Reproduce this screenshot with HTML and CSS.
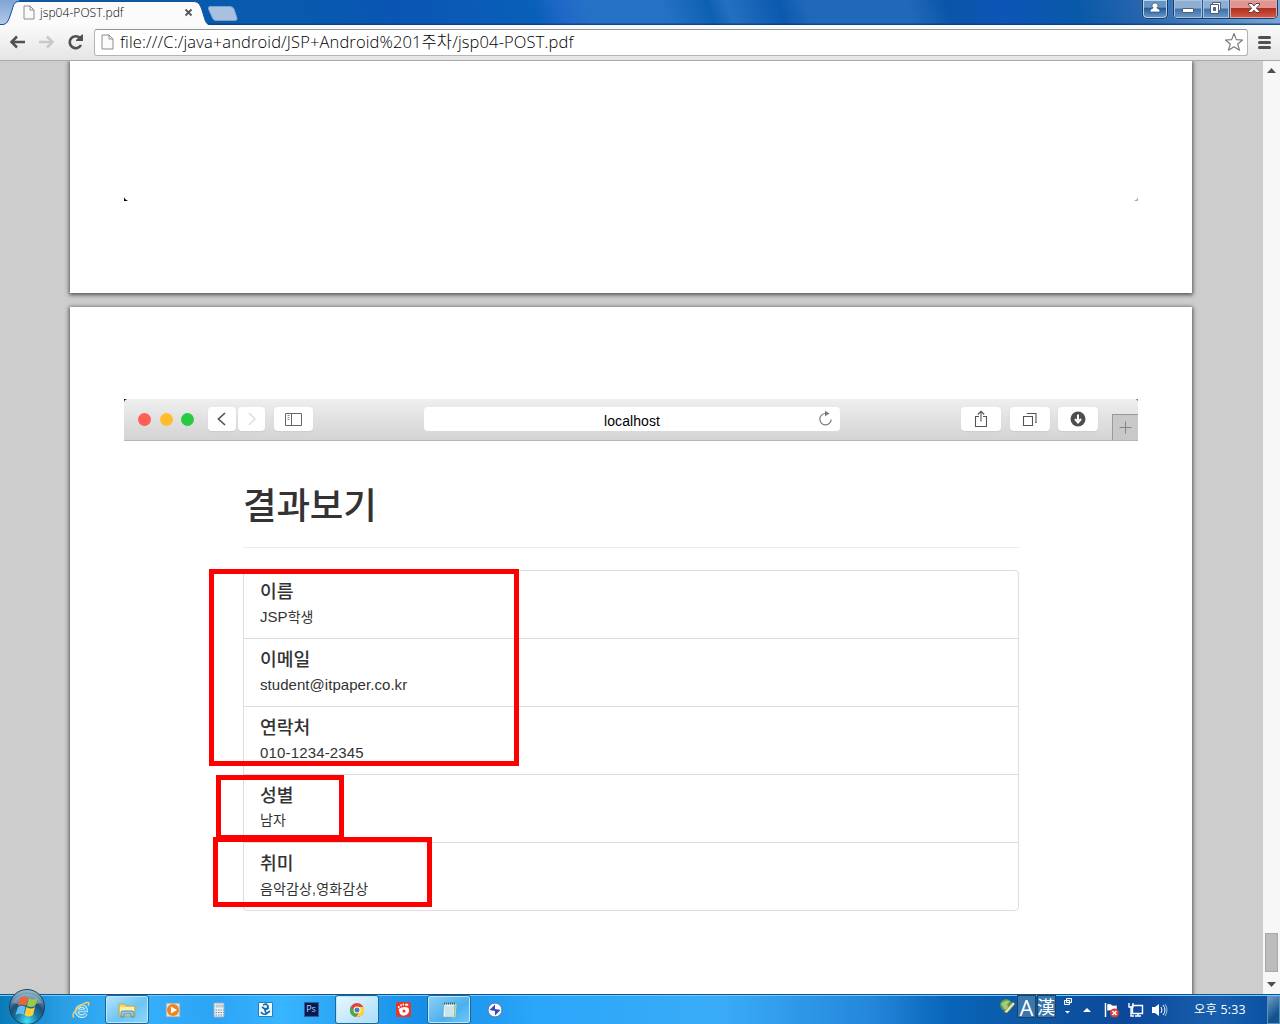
FILE: index.html
```html
<!DOCTYPE html>
<html lang="ko">
<head>
<meta charset="utf-8">
<title>jsp04-POST.pdf</title>
<link rel="stylesheet" href="styles.css">
</head>
<body>
<header class="titlebar">
  <svg class="tab-shapes" width="250" height="25" viewBox="0 0 250 25">
    <defs><linearGradient id="edge" x2="0" y2="1"><stop offset="0" stop-color="#80a4d4"/><stop offset="1" stop-color="#b3cbea"/></linearGradient></defs>
    <path d="M0 0H20C15 2 14 4 12 10C9 19 8 24 2 25H0Z" fill="url(#edge)"/>
    <path d="M0 26V24.500H3C8 24 9 19 12 10C14 3 15 1.500 20 1.500H193C198 1.500 200 4 202 10C205 19 205 24.500 211 25.500V26Z" fill="#fbfbfc" stroke="#174f91"/>
    <path d="M210 6.500H230Q233 6.500 234 9L237 18Q237.500 20.500 235 20.500H216Q213.500 20.500 212.500 18L208.500 9Q208 6.500 210 6.500Z" fill="#a9c1e1" stroke="#7c9fce"/>
  </svg>
  <div class="tab">
    <svg width="12" height="15" viewBox="0 0 12 15"><path d="M1 1H7L11 5V14H1ZM7 1V5H11" fill="#fafafa" stroke="#8d8d8d"/></svg>
    <span class="tab-title">jsp04-POST.pdf</span>
    <svg class="tab-close" width="9" height="9" viewBox="0 0 9 9"><path d="M1.500 1.500L7.500 7.500M7.500 1.500L1.500 7.500" stroke="#555" stroke-width="1.800"/></svg>
  </div>
  <div class="window-controls">
    <div class="control-group user"><svg width="24" height="18" viewBox="0 0 24 18"><path d="M12 3a2.700 2.700 0 0 1 1.700 5c2 .5 3.300 1.500 3.300 4H7c0-2.500 1.300-3.500 3.300-4A2.700 2.700 0 0 1 12 3Z" fill="#fff" stroke="#344963" stroke-width=".7"/></svg></div>
    <div class="control-group main-controls">
      <span class="control minimize"><svg width="28" height="18" viewBox="0 0 28 18"><path d="M8.500 8.500h11v4h-11z" fill="#fff" stroke="#565b74"/></svg></span>
      <span class="control restore"><svg width="26" height="18" viewBox="0 0 26 18"><path d="M9.500 2.500h8v8h-8z" fill="#fff" stroke="#565b74"/><path d="M7.500 4.500h8v9h-8z" fill="#fff" stroke="#565b74"/><path d="M10.500 7.500h2v3h-2z" fill="#477cae" stroke="#565b74"/></svg></span>
      <span class="control close"><svg width="47" height="18" viewBox="0 0 47 18"><path d="M18.500 3.500h3.500l2 2.500 2-2.500h3.500v1.500L26.300 8l3.200 3.300v1.200H26l-2-2.300-2 2.300h-3.500v-1.200L21.700 8l-3.200-3z" fill="#fff" stroke="#5c3943"/></svg></span>
    </div>
  </div>
</header>
<nav class="toolbar">
  <svg class="nav-icons" width="86" height="34" viewBox="0 0 86 34">
    <path d="M25 17H12M17 11.500L11.500 17L17 22.500" fill="none" stroke="#505050" stroke-width="2.500"/>
    <path d="M39 17H52M47 11.500L52.500 17L47 22.500" fill="none" stroke="#c9c9c9" stroke-width="2.500"/>
    <path d="M80 13A6 6 0 1 0 81 20" fill="none" stroke="#505050" stroke-width="2.600"/><path d="M76 16V15L82 9.500H83V16Z" fill="#505050"/>
  </svg>
  <div class="address">
    <svg width="13" height="16" viewBox="0 0 13 16"><path d="M1 1H8L12 5V15H1ZM8 1V5H12" fill="#fafafa" stroke="#8d8d8d"/></svg>
    <span class="url">file:///C:/java+android/JSP+Android%201주차/jsp04-POST.pdf</span>
    <svg class="star" width="20" height="20" viewBox="0 0 20 20"><path d="M10 1.500L12.300 7.600L18.500 8L13.700 12L15.500 18.200L10 14.700L4.500 18.200L6.300 12L1.500 8L7.700 7.600Z" fill="#fff" stroke="#777" stroke-width="1.100" stroke-linejoin="round"/></svg>
  </div>
  <svg class="menu" width="14" height="14" viewBox="0 0 14 14"><path d="M1.500 2.500h10M1.500 7.500h10M1.500 12.500h10" stroke="#505050" stroke-width="3" stroke-linecap="round"/></svg>
</nav>
<main class="viewer">
  <div class="pages">
    <section class="page previous">
      <svg width="4" height="4" viewBox="0 0 4 4"><path d="M0 0L1 2L4 4H0Z"/></svg>
      <svg width="4" height="4" viewBox="0 0 4 4"><path d="M4 0L3 2L0 4H4Z" fill="#aaa"/></svg>
    </section>
    <section class="page result">
      <div class="safari">
        <div class="safari-bar">
          <i class="dot red"></i><i class="dot yellow"></i><i class="dot green"></i>
          <div class="chip back"><svg width="28" height="24" viewBox="0 0 28 24"><path d="M17 6L10.500 12L17 18" fill="none" stroke="#555" stroke-width="1.700"/></svg></div>
          <div class="chip forward"><svg width="27" height="24" viewBox="0 0 27 24"><path d="M11 6L17 12L11 18" fill="none" stroke="#dedede" stroke-width="1.500"/></svg></div>
          <div class="chip sidebar"><svg width="39" height="24" viewBox="0 0 39 24"><path d="M11.500 6.500h16v12h-16zM17.500 6v12" fill="none" stroke="#666"/><path d="M13.500 8.500h2M13.500 10.500h2M13.500 12.500h2" stroke="#888"/></svg></div>
          <div class="host"><span>localhost</span><svg width="16" height="18" viewBox="0 0 16 18"><path d="M7.500 3.500A5.700 5.700 0 1 0 13.200 9.500" fill="none" stroke="#777" stroke-width="1.200"/><path d="M7 .8L11.500 3.500L7 6.300Z" fill="#777"/></svg></div>
          <div class="chip share"><svg width="40" height="24" viewBox="0 0 40 24"><path d="M18 9.500h-3.500v10h11v-10H22M20 14.500V5M16.800 7.500L20 4.300l3.200 3.200" fill="none" stroke="#555" stroke-width="1.100"/></svg></div>
          <div class="chip tabs"><svg width="40" height="24" viewBox="0 0 40 24"><path d="M13.500 9.500h9v9h-9zM17.500 7V6.500h8.500v9h-1" fill="none" stroke="#555" stroke-width="1.100"/></svg></div>
          <div class="chip download"><svg width="40" height="24" viewBox="0 0 40 24"><circle cx="20" cy="12" r="7.500" fill="#4e4e4e"/><path d="M20 7.500v6M17 12l3 3.500 3-3.500" fill="none" stroke="#fff" stroke-width="2"/></svg></div>
          <div class="new-tab"><svg width="25" height="26" viewBox="0 0 25 26"><path d="M6.500 12.500h12M12.500 6.500v12" stroke="#858585"/></svg></div>
        </div>
        <article class="content">
          <h1>결과보기</h1>
          <div class="rule"></div>
          <div class="list">
            <div class="item"><h2>이름</h2><p><span class="latin">JSP</span>학생</p></div>
            <div class="item"><h2>이메일</h2><p class="latin">student@itpaper.co.kr</p></div>
            <div class="item"><h2>연락처</h2><p class="latin phone">010-1234-2345</p></div>
            <div class="item"><h2>성별</h2><p>남자</p></div>
            <div class="item"><h2>취미</h2><p class="hobbies">음악감상,영화감상</p></div>
          </div>
        </article>
      </div>
    </section>
  </div>
  <aside class="scrollbar"><svg width="9" height="5" viewBox="0 0 9 5"><path d="M0 5L4.500 0L9 5Z" fill="#505050"/></svg><div class="thumb"></div><svg width="9" height="5" viewBox="0 0 9 5"><path d="M0 0L4.500 5L9 0Z" fill="#505050"/></svg></aside>
  <div class="mark contact"></div><div class="mark gender"></div><div class="mark hobby"></div>
</main>
<footer class="taskbar">
  <svg class="start" width="38" height="36" viewBox="0 0 38 36">
    <defs><radialGradient id="orb" cx=".5" cy=".9" r=".9"><stop offset="0" stop-color="#3ce2fb"/><stop offset=".35" stop-color="#1a78a8"/><stop offset=".6" stop-color="#1f4f74"/><stop offset="1" stop-color="#a3c3d2"/></radialGradient></defs>
    <circle cx="19" cy="19" r="17.500" fill="url(#orb)" stroke="#153f62"/><path d="M4 15A16 14 0 0 1 34 15Q19 18 4 15Z" fill="#c6dce5" opacity=".35"/>
    <path d="M12 10Q16 7 20 10L18 18Q14 15 10 18Z" fill="#ef6334"/><path d="M21 10Q25 13 30 10L27 18Q23 20 19 18Z" fill="#9cca44"/><path d="M10 19Q14 16 17.500 19L15.500 27Q12 24 7.500 27Z" fill="#62bdf0"/><path d="M18.500 19Q23 22 27 19L25 27Q20 30 16.500 27Z" fill="#ffce38"/>
  </svg>
  <div class="apps">
    <div class="app"><svg width="20" height="20" viewBox="0 0 20 20"><path d="M15 13.500C12.500 18 5.500 16.500 6 10.500C6.500 4.500 15 4.500 15 10.500H7" fill="none" stroke="#e6f8ff" stroke-width="3.600"/><path d="M15 13.500C12.500 18 5.500 16.500 6 10.500C6.500 4.500 15 4.500 15 10.500H7" fill="none" stroke="#55b9ea" stroke-width="2"/><path d="M3 17.500C-1 14.500 9 4 16 2.500C19 2 18 4 17 6" fill="none" stroke="#f1d262" stroke-width="1.500"/></svg></div>
    <div class="app active"><svg width="18" height="18" viewBox="0 0 18 18"><path d="M1 3h6l1 2h9v10H1z" fill="#f2d577" stroke="#c7a64c"/><path d="M2 6h14v8H2z" fill="#fff0a8"/><path d="M3 16v-4q0-2 2-2h9q2 0 2 2v4h-3v-3H6v3z" fill="#91cae5" stroke="#558fb2"/></svg></div>
    <div class="app"><svg width="18" height="18" viewBox="0 0 18 18"><path d="M2 2h14v14H2z" fill="#d4e5ef" stroke="#789fb7"/><circle cx="9" cy="9" r="6" fill="#ed871b"/><path d="M7 5.500v7l6-3.500z" fill="#fff"/></svg></div>
    <div class="app"><svg width="16" height="18" viewBox="0 0 16 18"><path d="M3 2h10v14H3z" fill="#edf4f8" stroke="#95abba"/><path d="M5 4h7v2H5z" fill="#cfe3db" stroke="#8ba0a8" stroke-width=".5"/><path d="M4.500 9h8M4.500 11.500h8M4.500 14h8" stroke="#718896" stroke-dasharray="1.500 1"/></svg></div>
    <div class="app"><svg width="17" height="17" viewBox="0 0 17 17"><path d="M1.500 1.500h14v14h-14z" fill="#edfaff" stroke="#2b7fb5"/><path d="M6 4l3-1 2 2-1 3-3 1M5 6l3 2 4-1M8 9l1 3M4 11q2 3 5 2l4-3" fill="none" stroke="#146eaa" stroke-width="1.700"/></svg></div>
    <div class="app"><span class="photoshop">Ps</span></div>
    <div class="app active chrome"><svg width="16" height="16" viewBox="0 0 16 16"><circle cx="8" cy="8" r="7" fill="#e04639"/><path d="M8 5h6.300A7 7 0 0 1 7 15L11 9.500Z" fill="#ffd43d"/><path d="M2 4.400L5.500 10L8.500 11L6.500 15A7 7 0 0 1 2 4.400Z" fill="#49a84a"/><circle cx="8" cy="8" r="3.500" fill="#fff"/><circle cx="8" cy="8" r="2.500" fill="#3e82ba"/></svg></div>
    <div class="app"><svg width="17" height="17" viewBox="0 0 17 17"><rect x="1" y="1" width="15" height="15" rx="2" fill="#ed3428"/><path d="M3.500 8Q9 4.500 13.500 7Q15 11 12 13.500Q8 16 5 13Z" fill="#fff"/><path d="M3 6h1.500M5.300 4.300h1.500M7.600 3.600h1.500M10.200 3.800h3" stroke="#fff" stroke-width="2"/><circle cx="9" cy="10" r="1.500" fill="#ed3428"/></svg></div>
    <div class="app active note"><svg width="17" height="18" viewBox="0 0 17 18"><path d="M3 3h11l-1 13H2z" fill="#e7f5f3" stroke="#86aab1" stroke-width=".7"/><path d="M3 2.500h11" stroke="#4d5c5b" stroke-width="2" stroke-dasharray="1 1"/><path d="M4 6h9M4 8h9M4 10h8M4 12h8M4 14h8" stroke="#9fcdda" stroke-width=".8"/><path d="M14 3l1 1-1 12h-2" fill="none" stroke="#e8d982"/></svg></div>
    <div class="app"><svg width="16" height="16" viewBox="0 0 16 16"><circle cx="8" cy="8" r="7" fill="#f9fbff" stroke="#64728d"/><path d="M2.500 8L8 2.500V7l5.500 1L8 13.500V9z" fill="#304cc0"/></svg></div>
  </div>
  <div class="tray">
    <svg class="ime-icon" width="17" height="18" viewBox="0 0 17 18"><circle cx="7" cy="7" r="6" fill="#4f9d57"/><path d="M2 6q4-5 9-3l-3 4 2 3-4 2z" fill="#abc779"/><path d="M5 14L14 4l2 2L8 15z" fill="#eee8a7" stroke="#82724c" stroke-width=".7"/></svg>
    <span class="ime">A</span><span class="ime han">漢</span>
    <svg class="ime-options" width="10" height="20" viewBox="0 0 10 20"><path d="M3.500 1.500h5v4h-5zM1.500 3.500h5v4h-5z" fill="#2a65a0" stroke="#fff"/><path d="M2 14h5l-2.500 2.500z" fill="#fff"/></svg>
    <svg class="up" width="8" height="5" viewBox="0 0 8 5"><path d="M0 5L4 1L8 5Z" fill="#fff"/></svg>
    <svg class="flag" width="18" height="18" viewBox="0 0 18 18"><path d="M2.500 2v14" stroke="#fff" stroke-width="1.500"/><path d="M4 3q3-1 5 1 2 1 5 0v6q-3 2-5 0-2-1-5 0z" fill="#fff" stroke="#273f56" stroke-width=".5"/><circle cx="11.500" cy="12" r="4.500" fill="#db4037"/><path d="M9.500 10l4 4m0-4l-4 4" stroke="#fff" stroke-width="1.500"/></svg>
    <svg class="network" width="17" height="18" viewBox="0 0 17 18"><path d="M5.500 4.500h10v8h-10zM8 15h6M11 13v2M2 2v4h4V2M4 6v9h3" fill="none" stroke="#fff" stroke-width="1.400"/></svg>
    <svg class="volume" width="17" height="16" viewBox="0 0 17 16"><path d="M1 5h3l4-3v12l-4-3H1z" fill="#fff"/><path d="M10 5q2 3 0 6M12 3q4 5 0 10" fill="none" stroke="#fff"/><path d="M14 2q4 6 0 12" fill="none" stroke="#9fbbdf"/></svg>
    <time>오후 5:33</time>
    <div class="show-desktop"></div>
  </div>
</footer>
</body>
</html>
```
FILE: styles.css
```css
* { box-sizing: border-box; }
body { margin: 0; width: 1280px; height: 1024px; overflow: hidden; display: flex; flex-direction: column; font-family: "Open Sans", "Noto Sans CJK KR", sans-serif; }
svg { display: block; flex: none; }
h1, h2, p { margin: 0; font-weight: 400; }
.titlebar { position: relative; height: 25px; flex: none; display: flex; justify-content: space-between; background: linear-gradient(180deg, transparent 90%, #073e7d 100%), linear-gradient(70deg, #075aae 0 24%, #0a55b3 31%, #0960b9 42%, #2068c8 44%, #2471c5 46% 52%, #0d61b2 55.500%, #246fc0 57%, #0b59af 61%, #2068b9 63% 71%, #0b55a8 74%, #0d55b7 78%, #0959a9 84%, #2865ae 89%, #7ca8d7 100%); }
.tab-shapes { position: absolute; left: 0; top: 0; }
.tab { position: relative; display: flex; align-items: center; width: 196px; height: 25px; padding-left: 23px; }
.tab-title { margin-left: 5px; font-size: 12px; font-weight: 350; color: #000; line-height: 20px; letter-spacing: .050px; white-space: nowrap; }
.tab-close { margin-left: auto; margin-right: 3px; }
.window-controls { display: flex; gap: 5px; padding-right: 2px; }
.control-group { display: flex; height: 19px; border: 1px solid #173b68; border-top: 0; border-radius: 0 0 5px 5px; overflow: hidden; box-shadow: inset 0 0 0 1px #b9d2eb, 0 0 1px #cae1f6; }
.user { width: 26px; background: linear-gradient(#6595c6 40%, #225b9a 45%, #6c9acb); }
.main-controls { width: 105px; }
.control { height: 18px; border-right: 1px solid #31557c; box-shadow: inset 0 0 0 1px #a6c5e4; background: linear-gradient(#8eafd2 45%, #3f70a9 50%, #6b9acb); }
.minimize { width: 29px; }
.restore { width: 27px; }
.close { width: 48px; border: 0; background: linear-gradient(#df9690 42%, #b42e1d 47%, #ce5d4b); box-shadow: inset 0 0 0 1px #e3aaa6; }
.toolbar { height: 36px; flex: none; display: flex; align-items: center; gap: 8px; padding-bottom: 1px; border-bottom: 1px solid #a9a9a9; background: linear-gradient(#fafafa, #e5e5e5); }
.address { display: flex; align-items: center; width: 1154px; height: 27px; border: 1px solid #b4b4b4; border-top-color: #969696; border-radius: 3px; background: #fff; padding-left: 6px; }
.url { margin-left: 6px; font-size: 16.500px; font-weight: 300; color: #000; line-height: 24px; letter-spacing: .125px; white-space: nowrap; }
.star { margin-left: auto; margin-right: 3px; }
.menu { margin-left: 2px; }
.viewer { position: relative; min-height: 0; flex: 1; display: flex; overflow: hidden; background: #cdcdcd; }
.pages { width: 1263px; padding: 0 71px 0 70px; display: flex; flex-direction: column; gap: 14px; }
.page { background: #fff; box-shadow: 0 1px 4px 1px #555; }
.previous { height: 232px; flex: none; display: flex; justify-content: space-between; padding: 136px 54px 0; }
.result { height: 700px; flex: none; padding: 92px 54px 0; }
.safari-bar { display: flex; height: 42px; border-bottom: 1px solid #b6b6b6; background: linear-gradient(#efefef, #d3d3d3); padding: 8px 0 0 14px; border-radius: 4px 4px 0 0; }
.safari { background: linear-gradient(135deg, #000 3px, transparent 3px), linear-gradient(225deg, #887068 2px, transparent 2px); }
.dot { width: 13px; height: 13px; margin: 6px 8.500px 0 0; border-radius: 50%; }
.red { background: #ff5f57; }
.yellow { background: #ffbd2e; }
.green { background: #28ca42; }
.chip { height: 24px; background: #fff; border-radius: 4px; box-shadow: 0 1px 1px #ccc; }
.back { margin-left: 5px; width: 28px; }
.forward { width: 27px; margin-left: 2px; }
.sidebar { width: 39px; margin-left: 9px; }
.host { display: flex; align-items: center; width: 416px; height: 24px; margin-left: 111px; padding: 0 6px 0 23px; border-radius: 4px; background: #fff; font: 14px/24px "Liberation Sans", sans-serif; letter-spacing: .080px; }
.host span { flex: 1; text-align: center; padding-top: 3px; }
.share { margin-left: 121px; width: 40px; }
.tabs { margin-left: 9px; width: 40px; }
.download { margin-left: 8px; width: 40px; }
.new-tab { width: 26px; height: 26px; margin: 7px 0 0 auto; border: 1px solid #999; border-width: 1px 0 0 1px; background: #c8c8c8; }
.content { width: 776px; margin-left: 119px; padding-top: 34px; color: #333; }
h1 { height: 72px; font: 500 36.500px/58px "Noto Sans CJK KR", sans-serif; letter-spacing: -.150px; white-space: nowrap; }
.rule { height: 1px; background: #ededed; }
.list { margin-top: 22px; border: 1px solid #ddd; border-radius: 4px; }
.item { height: 68px; padding: 7px 16px; border-bottom: 1px solid #ddd; }
.item:last-child { height: 67px; border-bottom: 0; }
.item h2 { font: 500 18.200px/25px "Noto Sans CJK KR", sans-serif; }
.item p { padding-top: 1px; font: 400 14px/25px "Liberation Sans", "Noto Sans CJK KR", sans-serif; white-space: nowrap; }
.item .latin { font-size: 15px; letter-spacing: .050px; }
.item .phone { letter-spacing: .160px; }
.item .hobbies { padding-top: 2px; letter-spacing: .150px; }
.scrollbar { width: 17px; display: flex; flex-direction: column; align-items: center; padding: 7px 0; background: #f7f7f7; }
.thumb { width: 13px; height: 39px; margin-top: auto; margin-bottom: 10px; border: 1px solid #a8a8a8; background: #bcbcbc; }
.mark { position: absolute; border: 5px solid #f00; }
.contact { left: 209px; top: 508px; width: 310px; height: 197px; }
.gender { left: 216px; top: 714px; width: 128px; height: 65px; }
.hobby { left: 213px; top: 776px; width: 219px; height: 70px; }
.taskbar { position: relative; height: 30px; flex: none; display: flex; justify-content: space-between; padding-left: 59px; border-top: 1px solid #12548f; box-shadow: inset 0 1px #72c9ff; background: linear-gradient(90deg, #087bb7, #2a9fe6 5%, #37b0fb 10%, #2ba4f5 17%, #38b5ff 22%, #168ee8 33%, #2aa6fa 42%, #3aacf7 56%, #2487db 68%, #0965b9 74%, #0d57a3 81%, #0c489a 88%, #195fae 95%, #074fa0); }
.start { position: absolute; left: 8px; top: -7px; }
.apps { display: flex; gap: 2px; }
.app { width: 44px; height: 29px; display: flex; align-items: center; justify-content: center; }
.active { border: 1px solid #23658f; box-shadow: inset 0 0 0 1px #b7e8ff; border-radius: 3px; background: linear-gradient(145deg, #b9e4fc, #6cc5f4 55%, #8dd6fb); }
.chrome { background: linear-gradient(145deg, #eaf8ff, #a8dcf8); }
.note { background: linear-gradient(145deg, #8fd1f5, #4bb0ee 60%, #70c9fc); }
.photoshop { width: 15px; height: 15px; background: #071b52; border: 1px solid #345c9d; color: #a7dcfb; font: 9px/12px "Open Sans", sans-serif; text-align: center; }
.tray { display: flex; align-items: center; width: 281px; }
.ime { width: 19px; height: 23px; margin-left: 1px; align-self: flex-start; border: 1px solid #223e60; background: #3977ad; color: #fff; font: 22px/22px "Open Sans", sans-serif; text-align: center; }
.ime.han { font: 18px/20px "Noto Sans CJK KR", sans-serif; text-indent: -1px; }
.ime-icon { align-self: flex-start; margin-top: 3px; }
.ime-options { margin-left: 7px; align-self: flex-start; margin-top: 2px; }
.up { margin-left: 10px; }
.flag { margin-left: 12px; }
.network { margin-left: 6px; }
.volume { margin-left: 7px; }
time { margin-left: 26px; color: #fff; font: 12.300px/28px "Open Sans", "Noto Sans CJK KR", sans-serif; letter-spacing: .250px; white-space: nowrap; }
.show-desktop { margin-left: auto; width: 13px; height: 28px; border: 1px solid #5a91bd; background: linear-gradient(135deg, #6c9cc5, #14528d 70%); }
```
